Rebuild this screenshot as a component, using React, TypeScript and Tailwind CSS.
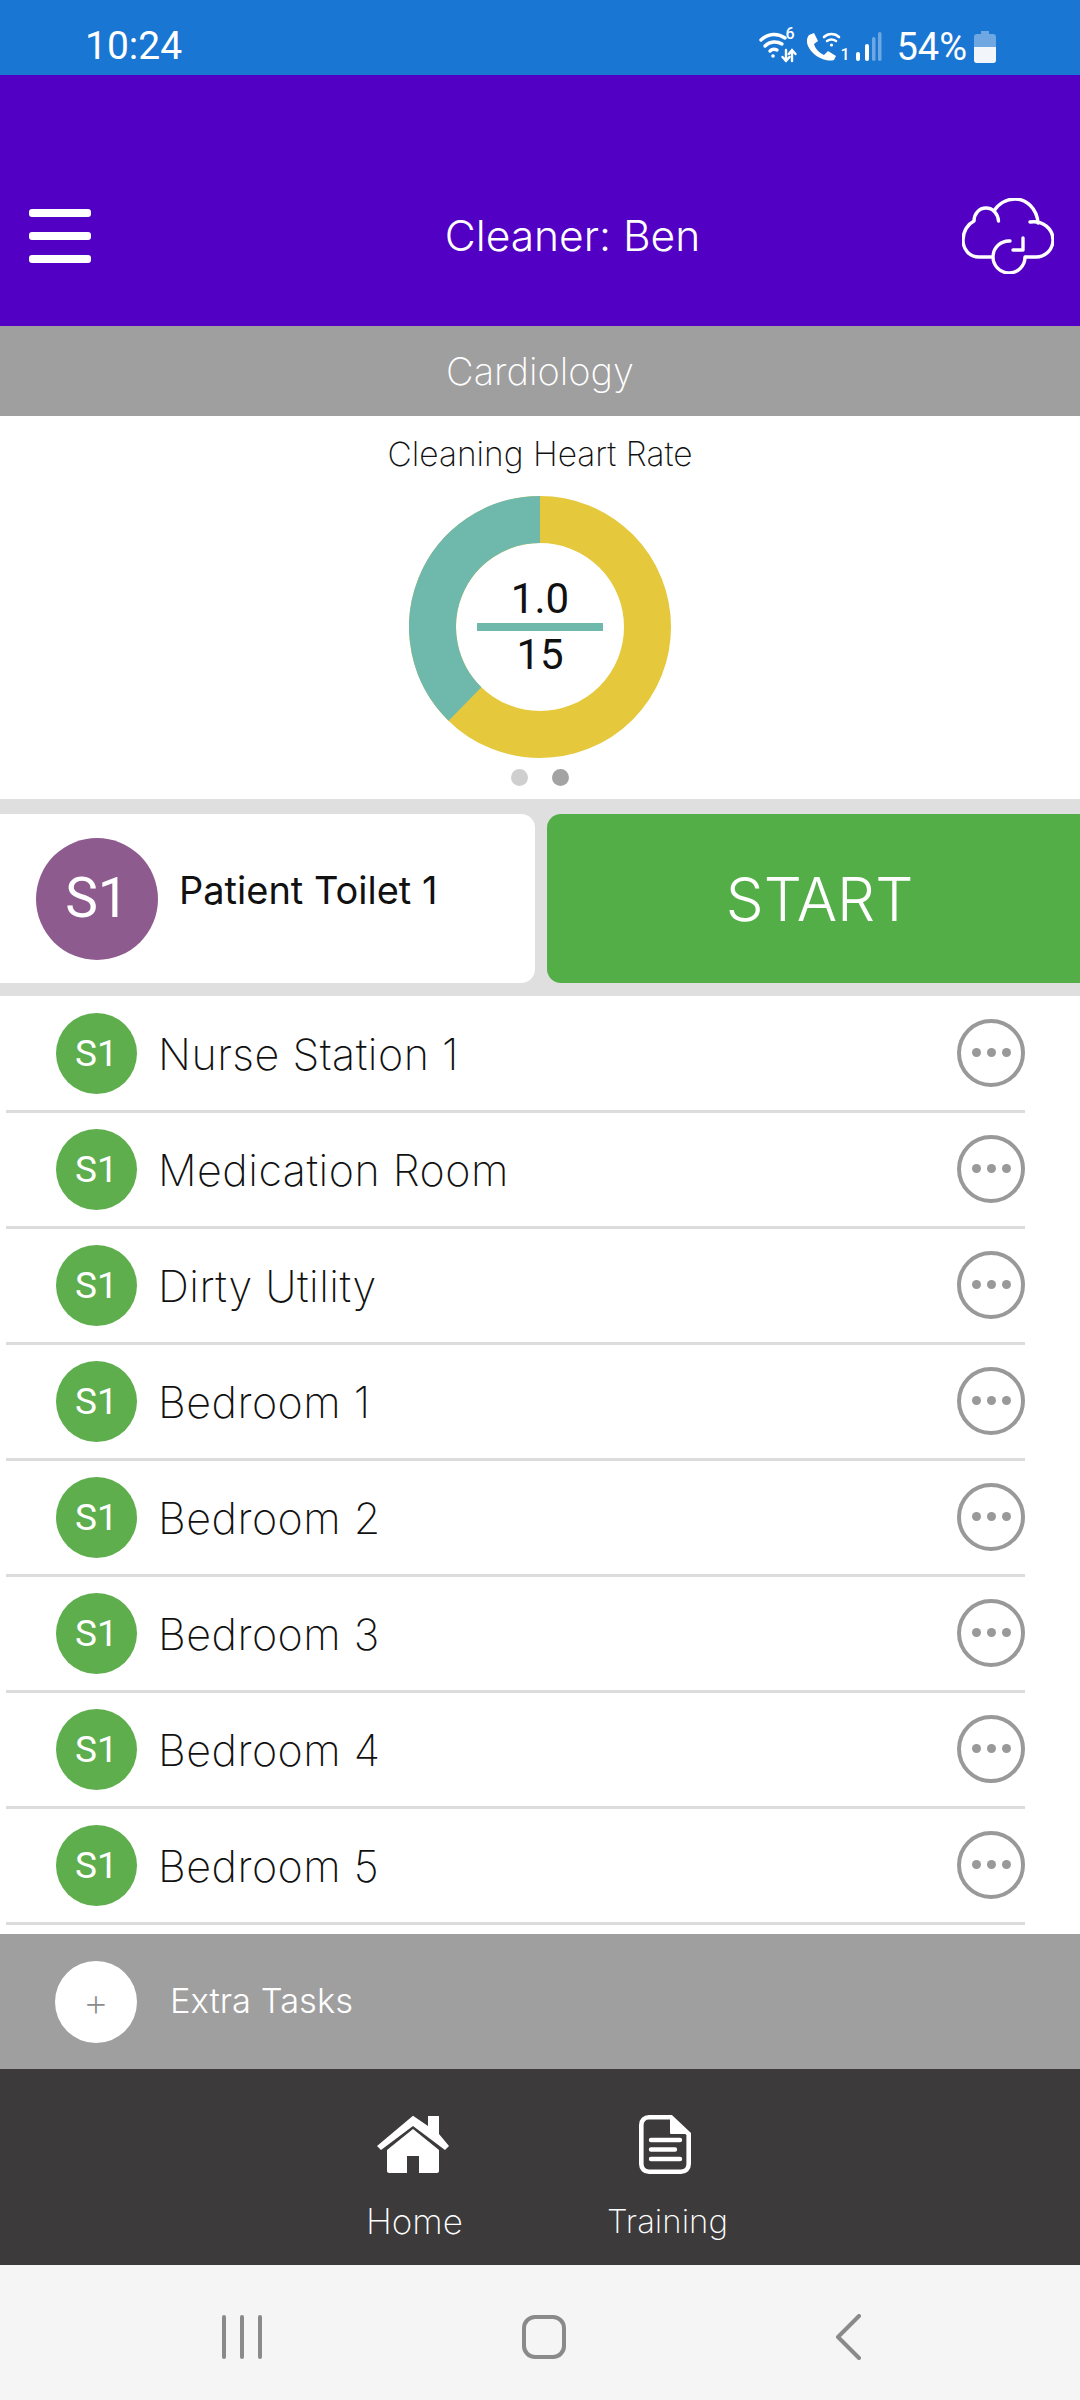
const rooms = ["Nurse Station 1", "Medication Room", "Dirty Utility", "Bedroom 1", "Bedroom 2", "Bedroom 3", "Bedroom 4", "Bedroom 5"];

function Cloud() {
  return (
    <svg width="92" height="76" viewBox="-1 -1 92 76" fill="none" stroke="white" strokeWidth="3.4" strokeLinecap="round" strokeLinejoin="round">
      <path d="M28 58H16C6 58 0 50 0 41C0 32 5 25 11 22C11 15 16 9 23 9C30 9 35 15 35.500 22" />
      <path d="M31 12C35 5 43 0 52 0C64 0 74 10 75 24" />
      <path d="M67 23C80 21 90 30 90 41C90 51 82 58 73 58H63" />
      <path d="M62 58A16 16 0 1 1 47 42" />
      <path d="M60 39V51H50" />
    </svg>
  );
}

function StatusIcons() {
  return (
    <div className="flex items-center h-[40px]">
      <svg width="92" height="32" viewBox="0 0 92 32" fill="none" stroke="white" strokeLinecap="round" className="mr-[3px]">
        <path d="M2 9C9 2 19 2 26 7" strokeWidth="3.400" />
        <path d="M6 15C11 10 18 10 23 13" strokeWidth="3.400" />
        <path d="M11 20C13 18 16 18 18 19" strokeWidth="3.400" />
        <circle cx="14" cy="25" r="1.800" fill="white" stroke="none" />
        <path d="M31 19V30M27.500 26L31 30L34.500 26M37 30V19M33.800 23L37 19L40.500 23" strokeWidth="2.400" transform="translate(-4 0)" />
        <path d="M50 4L55 2L59 10L55 13C56 17 60 22 65 24L69 20L77 25L75 29C70 31 60 28 54 22C48 16 46 9 50 4Z" fill="white" stroke="none" />
        <path d="M65 6C69 2 76 2 80 6" strokeWidth="2.600" />
        <path d="M68 10C71 8 74 8 77 10" strokeWidth="2.600" />
        <circle cx="72.500" cy="14" r="1.600" fill="white" stroke="none" />
      </svg>
    </div>
  );
}

function Home() {
  return (
    <svg width="72" height="58" viewBox="0 0 72 58" fill="white" className="mr-[3px]">
      <path d="M36 0.700L51 11V1H62V19L72 31L68 35L36 11L4 35L0 31Z" strokeLinejoin="round" />
      <path d="M36 14L10 35V56C10 57 11 58 12 58H30V41H42V58H60C61 58 62 57 62 56V35Z" />
    </svg>
  );
}

function Doc() {
  return (
    <svg width="52" height="59" viewBox="0 0 52 59" fill="none" className="mr-[5px]">
      <path d="M10 2.300H32L49.700 19V49C49.700 53.500 46.500 56.700 42 56.700H10C5.500 56.700 2.300 53.500 2.300 49V10C2.300 5.500 5.500 2.300 10 2.300Z" stroke="white" strokeWidth="4.600" />
      <path d="M32 4V18H48Z" fill="white" stroke="white" strokeWidth="2" strokeLinejoin="round" />
      <path d="M12 25H41M12 34.500H36M12 44H41" stroke="white" strokeWidth="4.400" strokeLinecap="round" />
    </svg>
  );
}

export default function App() {
  return (
    <div className="w-[1080px] h-[2400px] flex flex-col bg-white overflow-hidden font-['Inter',sans-serif]">
      <div className="h-[75px] bg-[#1976d2] flex items-center justify-between pl-[85px] pr-[84px] text-white font-['Roboto',sans-serif] text-[39px] pt-[18px]">
        <span className="leading-none">10:24</span>
        <div className="flex items-center">
          <div className="relative">
            <StatusIcons />
            <span className="absolute left-[26px] top-[-1px] text-[16px] font-medium leading-none">6</span>
            <span className="absolute left-[81px] top-[20px] text-[16px] font-medium leading-none">1</span>
          </div>
          <svg width="28" height="30" viewBox="0 0 28 30" className="mr-[14px]">
            <rect x="2" y="20" width="4" height="9" rx="2" fill="white" />
            <rect x="11" y="12" width="4" height="17" rx="2" fill="white" />
            <rect x="18" y="5" width="3.500" height="24" rx="1.700" fill="#6ea7e2" />
            <rect x="24" y="0" width="3.500" height="29" rx="1.700" fill="#6ea7e2" />
          </svg>
          <span className="leading-none text-[38px] mr-[7px]">54%</span>
          <svg width="22" height="32" viewBox="0 0 22 32">
            <path d="M7 0H15V3H19C21 3 22 4 22 6V29C22 31 21 32 19 32H3C1 32 0 31 0 29V6C0 4 1 3 3 3H7Z" fill="#6ea7e2" />
            <path d="M0 16H22V29C22 31 21 32 19 32H3C1 32 0 31 0 29Z" fill="#f2f6fb" />
          </svg>
        </div>
      </div>

      <div className="h-[251px] bg-[#5200c4] flex items-center justify-between pl-[29px] pr-[26px] pt-[71px] text-white">
        <div className="flex flex-col gap-[15px]">
          <div className="w-[62px] h-[8px] rounded-[3px] bg-white" />
          <div className="w-[62px] h-[8px] rounded-[3px] bg-white" />
          <div className="w-[62px] h-[8px] rounded-[3px] bg-white" />
        </div>
        <span className="text-[42.500px] font-light leading-none ml-[92px]">Cleaner: Ben</span>
        <Cloud />
      </div>

      <div className="h-[90px] bg-[#9f9f9f] flex items-center justify-center text-white text-[38px] font-extralight">Cardiology</div>

      <div className="h-[383px] flex flex-col items-center">
        <div className="text-[33.500px] font-extralight text-[#111] leading-none mt-[22px]">Cleaning Heart Rate</div>
        <div className="relative w-[262px] h-[262px] mt-[24px]">
          <svg width="262" height="262" viewBox="0 0 262 262">
            <circle cx="131" cy="131" r="107.500" fill="none" stroke="#e5c83c" strokeWidth="47" />
            <path d="M131 23.500A107.500 107.500 0 0 0 56 208" fill="none" stroke="#6fb8ac" strokeWidth="47" />
          </svg>
          <div className="absolute inset-0 flex flex-col items-center justify-center font-['Roboto',sans-serif] text-[42px] text-[#111] leading-none">
            <span>1.0</span>
            <div className="w-[126px] h-[8px] bg-[#6fb8ac] my-[3px]" />
            <span>15</span>
          </div>
        </div>
        <div className="flex gap-[24px] mt-[11px]">
          <div className="w-[17px] h-[17px] rounded-full bg-[#cfcfcf]" />
          <div className="w-[17px] h-[17px] rounded-full bg-[#a3a3a3]" />
        </div>
      </div>

      <div className="h-[197px] bg-[#e0dfe0] flex items-center gap-[12px] pt-[2px]">
        <div className="w-[535px] h-[169px] bg-white rounded-r-[14px] flex items-center pl-[36px]">
          <div className="w-[122px] h-[122px] rounded-full bg-[#8e5b8f] text-white font-['Roboto',sans-serif] text-[55px] flex items-center justify-center">S1</div>
          <span className="ml-[21px] text-[38px] text-[#111] leading-none mb-[17px]">Patient Toilet 1</span>
        </div>
        <div className="flex-1 h-[169px] bg-[#54ae47] rounded-l-[14px] text-white text-[60px] font-light flex items-center justify-center pl-[12px]">START</div>
      </div>

      <div className="flex-1 flex flex-col pt-[1px]">
        {rooms.map((r) => (
          <div key={r} className="h-[116px] shrink-0 ml-[6px] w-[1019px] border-b-[3px] border-[#dcdcdc] flex items-center">
            <div className="ml-[50px] w-[81px] h-[81px] rounded-full bg-[#5fae4e] text-white font-['Roboto',sans-serif] text-[37px] flex items-center justify-center">S1</div>
            <span className="ml-[21px] mt-[2px] text-[43px] tracking-[0.5px] font-extralight text-[#111] leading-none">{r}</span>
            <div className="ml-auto w-[68px] h-[68px] rounded-full border-[4px] border-[#999999] flex items-center justify-center gap-[6px] mb-[2px]">
              <div className="w-[9px] h-[9px] rounded-full bg-[#999999]" />
              <div className="w-[9px] h-[9px] rounded-full bg-[#999999]" />
              <div className="w-[9px] h-[9px] rounded-full bg-[#999999]" />
            </div>
          </div>
        ))}
      </div>

      <div className="h-[135px] bg-[#9f9f9f] flex items-center pl-[55px]">
        <div className="w-[82px] h-[82px] rounded-full bg-white text-[#8c8c8c] text-[40px] font-extralight flex items-center justify-center">+</div>
        <span className="ml-[33px] text-[34.500px] font-light text-white leading-none">Extra Tasks</span>
      </div>

      <div className="h-[196px] bg-[#3c3a3b] flex items-start text-white font-extralight leading-none">
        <div className="ml-[366px] w-[97px] flex flex-col items-center pt-[46px] text-[35px]">
          <Home />
          <span className="mt-[31px]">Home</span>
        </div>
        <div className="ml-[144px] w-[121px] flex flex-col items-center pt-[46px] text-[33px]">
          <Doc />
          <span className="mt-[31px]">Training</span>
        </div>
      </div>

      <div className="h-[135px] bg-[#f5f5f5] flex items-center pt-[8px]">
        <svg width="40" height="44" viewBox="0 0 40 44" className="ml-[222px]" stroke="#8a8a8a" strokeWidth="4" strokeLinecap="round">
          <path d="M2 2V42M20 2V42M38 2V42" />
        </svg>
        <div className="ml-[260px] w-[44px] h-[44px] rounded-[13px] border-[4px] border-[#8a8a8a]" />
        <svg width="26" height="46" viewBox="0 0 26 46" className="ml-[269px]" fill="none" stroke="#8a8a8a" strokeWidth="4" strokeLinecap="round" strokeLinejoin="round">
          <path d="M24 2L3 23L24 44" />
        </svg>
      </div>
    </div>
  );
}
